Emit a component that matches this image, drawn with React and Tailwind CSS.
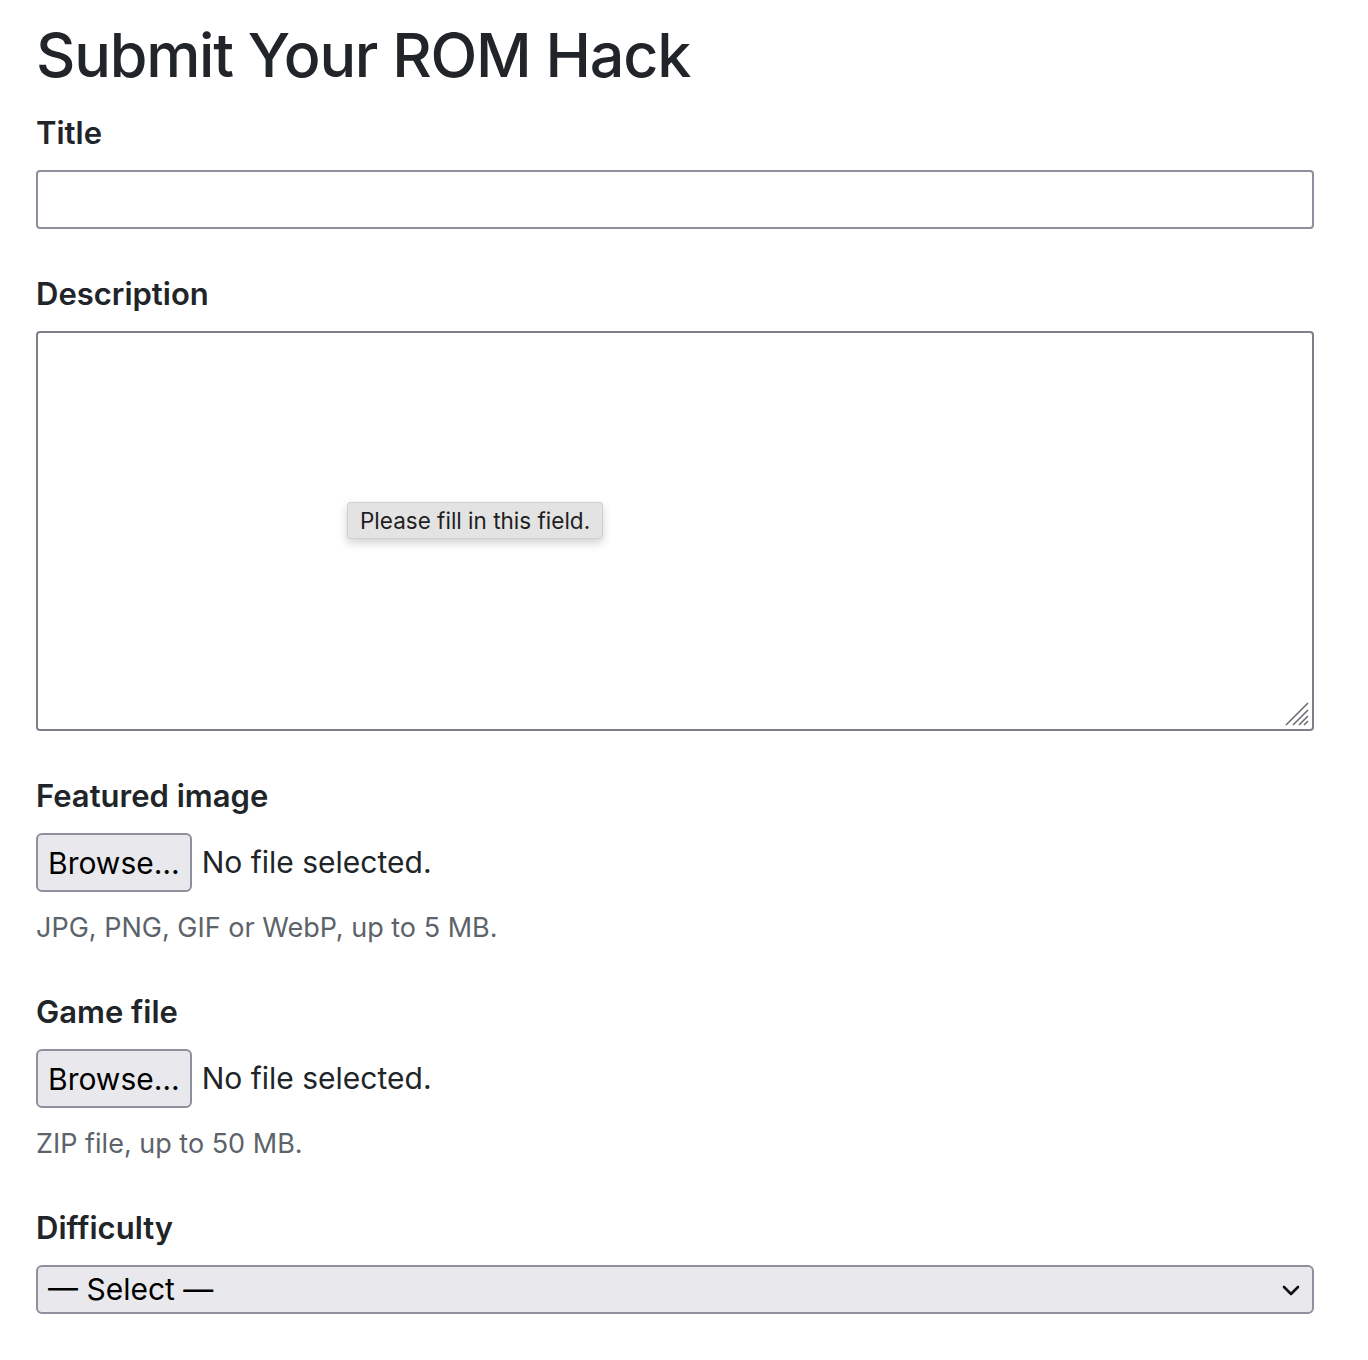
import React from "react";

const Label = ({ children }) => (
  <label className="block pt-[2px] text-[31px] leading-[38px] font-semibold text-[#212529] mb-[18px]">
    {children}
  </label>
);

const FileField = ({ hint }) => (
  <div>
    <div className="flex items-center gap-[10px]">
      <button
        type="button"
        className="h-[59px] px-[10px] rounded-[6px] border-2 border-[#8f8f9d] bg-[#e9e9ed] text-[30px] text-black leading-none"
      >
        Browse…
      </button>
      <span className="text-[30px] text-[#212529]">No file selected.</span>
    </div>
    <p className="mt-[19px] text-[27px] leading-[34px] text-[#5c636a]">{hint}</p>
  </div>
);

export default function App() {
  return (
    <div
      className="min-h-[1360px] bg-white px-[36px] pt-[18px]"
      style={{ fontFamily: "Inter, 'Noto Sans', sans-serif" }}
    >
      <div className="w-[1278px]">
        <h1 className="text-[61px] leading-[74px] font-medium tracking-[-0.02em] text-[#212529] mb-[20px]">
          Submit Your ROM Hack
        </h1>

        {/* Title */}
        <div className="mb-[44px]">
          <Label>Title</Label>
          <input
            type="text"
            className="block w-full h-[59px] rounded-[4px] border-2 border-[#8f8f9d] bg-white px-3 text-[30px] outline-none"
          />
        </div>

        {/* Description */}
        <div className="mb-[44px]">
          <Label>Description</Label>
          <div className="relative">
            <textarea className="block w-full h-[400px] rounded-[4px] border-2 border-[#7f7f8a] bg-white px-3 text-[30px] outline-none resize-none" />
            <svg
              className="absolute right-[4px] bottom-[4px]"
              width="26"
              height="26"
              viewBox="0 0 26 26"
              stroke="#6b6b73"
              strokeWidth="1.6"
            >
              <line x1="2" y1="24" x2="24" y2="2" />
              <line x1="9" y1="24" x2="24" y2="9" />
              <line x1="15" y1="24" x2="24" y2="15" />
              <line x1="20" y1="24" x2="24" y2="20" />
            </svg>
            <div className="absolute left-[311px] top-[171px] rounded-[3px] border border-[#d0d0d0] bg-[#e3e3e3] px-[12px] py-[5px] text-[22.5px] leading-[25px] text-[#1f1f1f] shadow-[0_4px_10px_rgba(0,0,0,0.18)]">
              Please fill in this field.
            </div>
          </div>
        </div>

        {/* Featured image */}
        <div className="mb-[46px]">
          <Label>Featured image</Label>
          <FileField hint="JPG, PNG, GIF or WebP, up to 5 MB." />
        </div>

        {/* Game file */}
        <div className="mb-[46px]">
          <Label>Game file</Label>
          <FileField hint="ZIP file, up to 50 MB." />
        </div>

        {/* Difficulty */}
        <div>
          <Label>Difficulty</Label>
          <div className="relative h-[49px] rounded-[6px] border-2 border-[#8f8f9d] bg-[#e9e9ed] flex items-center px-[10px]">
            <span className="text-[30px] text-black">— Select —</span>
            <svg
              className="absolute right-[12px] top-1/2 -translate-y-1/2"
              width="18"
              height="12"
              viewBox="0 0 18 12"
              fill="none"
              stroke="#111"
              strokeWidth="2.6"
              strokeLinecap="round"
              strokeLinejoin="round"
            >
              <path d="M2 3l7 7 7-7" />
            </svg>
          </div>
        </div>
      </div>
    </div>
  );
}
